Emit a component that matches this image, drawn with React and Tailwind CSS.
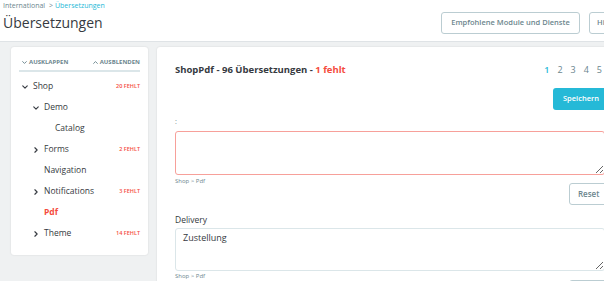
import React from "react";

const font = { fontFamily: '"Open Sans", "Liberation Sans", sans-serif' };

function Chevron({ dir = "down", className = "" }) {
  const d =
    dir === "down"
      ? "M1 2.5 L4 5.5 L7 2.5"
      : dir === "up"
      ? "M1 5.5 L4 2.5 L7 5.5"
      : "M2.5 1 L5.5 4 L2.5 7";
  return (
    <svg viewBox="0 0 8 8" className={className} fill="none">
      <path d={d} stroke="currentColor" strokeWidth="1.5" strokeLinecap="round" strokeLinejoin="round" />
    </svg>
  );
}

const tree = [
  { label: "Shop", level: 0, chevron: "down", missing: "20 FEHLT" },
  { label: "Demo", level: 1, chevron: "down" },
  { label: "Catalog", level: 2 },
  { label: "Forms", level: 1, chevron: "right", missing: "2 FEHLT" },
  { label: "Navigation", level: 1 },
  { label: "Notifications", level: 1, chevron: "right", missing: "3 FEHLT" },
  { label: "Pdf", level: 1, active: true },
  { label: "Theme", level: 1, chevron: "right", missing: "14 FEHLT" },
];

const indent = ["pl-[3px]", "pl-[14px]", "pl-[25px]"];

function Sidebar() {
  return (
    <div className="w-[137px] h-[208px] shrink-0 rounded-[3px] bg-white shadow-[0_0_2px_rgba(0,0,0,0.12)] px-[8px] pt-[11px]">
      <div className="flex items-center justify-between border-b-2 border-[#dbe6e9] pb-[3px] pl-[3px] text-[6px] font-bold text-[#6c868e]">
        <span className="flex items-center gap-[2px]">
          <Chevron dir="down" className="w-[5px] h-[5px]" />
          AUSKLAPPEN
        </span>
        <span className="flex items-center gap-[2px]">
          <Chevron dir="up" className="w-[5px] h-[5px]" />
          AUSBLENDEN
        </span>
      </div>
      <div className="mt-[4px] flex flex-col">
        {tree.map((n) => (
          <div key={n.label} className={`flex h-[21px] items-center ${indent[n.level]}`}>
            <span className="w-[11px] shrink-0 flex items-center text-[#363a41]">
              {n.chevron && <Chevron dir={n.chevron} className="w-[6px] h-[6px]" />}
            </span>
            <span
              className={
                n.active
                  ? "text-[8.5px] font-bold text-[#f54c3e]"
                  : "text-[8.5px] text-[#363a41]"
              }
            >
              {n.label}
            </span>
            {n.missing && (
              <span className="ml-auto text-[5.5px] font-semibold text-[#f54c3e]">{n.missing}</span>
            )}
          </div>
        ))}
      </div>
    </div>
  );
}

function Content() {
  return (
    <div className="w-[470px] shrink-0 rounded-[3px] bg-white shadow-[0_0_2px_rgba(0,0,0,0.12)] pl-[18px] pt-[16px] h-[260px]">
      <div className="w-[440px]">
        <div className="flex items-center h-[14px]">
          <span className="text-[9.5px] font-bold text-[#363a41]">
            ShopPdf - 96 Übersetzungen - <span className="text-[#f54c3e]">1 fehlt</span>
          </span>
          <div className="ml-auto flex gap-[8px] pr-[13px] text-[9px] text-[#6c868e]">
            <span className="font-semibold text-[#25b9d7]">1</span>
            <span>2</span>
            <span>3</span>
            <span>4</span>
            <span>5</span>
          </div>
        </div>
        <div className="mt-[11px] flex justify-end">
          <button className="h-[22px] w-[62px] rounded-[3px] bg-[#25b9d7] pl-[10px] text-left text-[7.5px] font-semibold text-white">
            Speichern
          </button>
        </div>
        <div className="mt-[6px] text-[7px] leading-[12px] text-[#6c868e]">:</div>
        <textarea
          className="mt-[3px] block h-[44px] w-[430px] rounded-[3px] border border-[#f7a09a] bg-white"
          defaultValue=""
        />
        <div className="mt-[1px] text-[6px] leading-[10px] text-[#6c868e]">Shop &gt; Pdf</div>
        <div className="-mt-[3px] flex justify-end">
          <button className="h-[22px] w-[46px] rounded-[3px] border border-[#bbcdd2] bg-white pl-[8px] text-left text-[8px] font-semibold text-[#6c868e]">
            Reset
          </button>
        </div>
        <div className="mt-[8px] text-[8.5px] leading-[14px] text-[#363a41]">Delivery</div>
        <textarea
          className="mt-[1px] block h-[43px] w-[430px] rounded-[3px] border border-[#dbe6e9] bg-white px-[7px] py-[2px] text-[9px] text-[#363a41]"
          defaultValue="Zustellung"
        />
        <div className="flex items-start justify-between">
          <span className="text-[6px] leading-[10px] text-[#6c868e]">Shop &gt; Pdf</span>
          <span className="mt-[9px] h-[22px] w-[46px] rounded-[3px] border border-[#bbcdd2]" />
        </div>
      </div>
    </div>
  );
}

export default function App() {
  return (
    <div style={font} className="w-[604px] h-[281px] overflow-hidden bg-[#eff1f2]">
      <div className="h-[42px] bg-white border-b border-[#dfe3e6] flex">
        <div className="pl-[3px]">
          <div className="pt-[1px] text-[7px] leading-[9px] text-[#6c868e]">
            International <span className="mx-[2px]">&gt;</span>
            <span className="text-[#25b9d7]">Übersetzungen</span>
          </div>
          <div className="mt-[2px] text-[14px] leading-[22px] text-[#363a41]">Übersetzungen</div>
        </div>
        <div className="ml-auto flex gap-[9px] pt-[12px] -mr-[40px]">
          <button className="h-[22px] w-[139px] rounded-[3px] border border-[#bbcdd2] bg-white text-[7.5px] font-semibold text-[#6c868e]">
            Empfohlene Module und Dienste
          </button>
          <button className="h-[22px] w-[55px] rounded-[3px] border border-[#bbcdd2] bg-white pl-[7px] text-left text-[7.5px] font-semibold text-[#6c868e]">
            Hilfe
          </button>
        </div>
      </div>
      <div className="flex gap-[9px] pl-[11px] pt-[5px]">
        <Sidebar />
        <Content />
      </div>
    </div>
  );
}
